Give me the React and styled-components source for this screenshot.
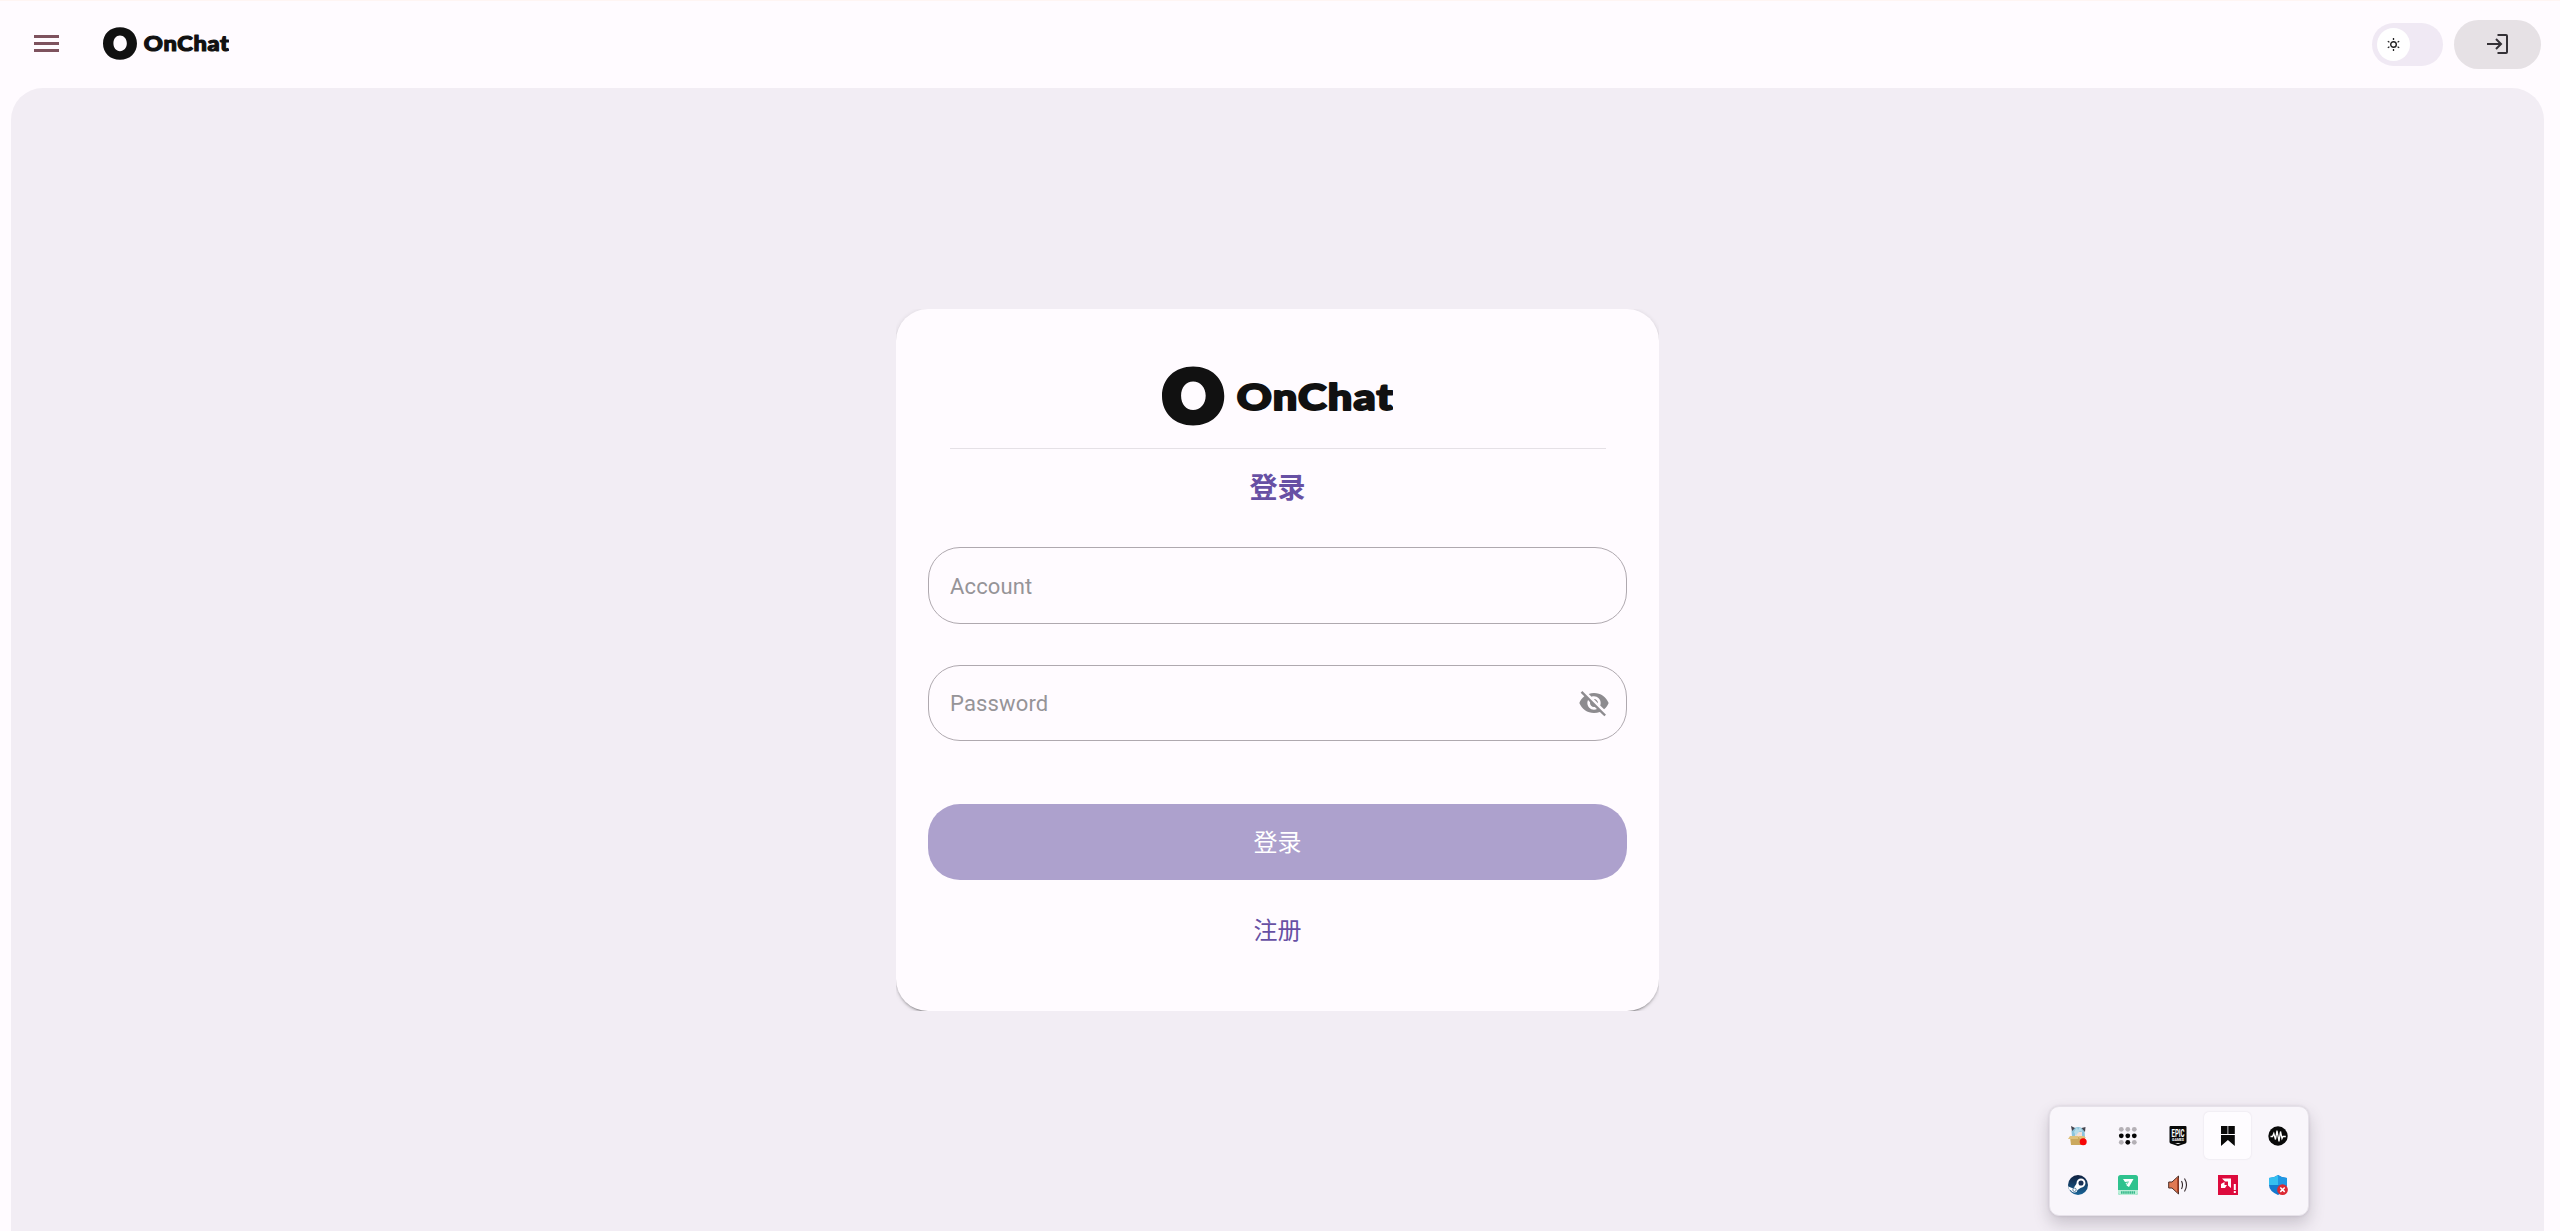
import React from 'react';
import styled, { createGlobalStyle } from 'styled-components';

const Global = createGlobalStyle`
  *, *::before, *::after { box-sizing: border-box; }
  html, body { margin: 0; height: 100%; overflow: hidden; background: #fffbff; }
  body { font-family: Roboto, "Noto Sans CJK SC", sans-serif; color: #1c1b1e; }
`;

const Page = styled.div`
  height: 1231px;
  display: flex;
  flex-direction: column;
  background: #fffbff;
  border-top: 1px solid #fff5f3;
  overflow: hidden;
`;

const Header = styled.header`
  flex: none;
  height: 87px;
  padding: 0 19px 0 32px;
  display: flex;
  align-items: center;
  gap: 11px;
`;

const Leading = styled.div`
  flex: 1;
  display: flex;
  align-items: center;
  gap: 41.5px;
  padding-bottom: 2px;
`;

const MenuButton = styled.button`
  width: 29px;
  height: 29px;
  padding: 0;
  border: 0;
  background: none;
  display: grid;
  place-items: center;
`;

const Switch = styled.div`
  width: 71px;
  height: 43px;
  padding: 5px;
  border-radius: 22px;
  background: #f0e9f4;
`;

const Thumb = styled.div`
  width: 33px;
  height: 33px;
  border-radius: 50%;
  background: #fff;
  display: grid;
  place-items: center;
`;

const ExitButton = styled.button`
  width: 87px;
  height: 49px;
  padding: 0 0 2px 1px;
  border: 0;
  border-radius: 25px;
  background: #e6e1e5;
  display: grid;
  place-items: center;
`;

const Main = styled.main`
  flex: 1;
  margin: 0 16px 0 11px;
  border-radius: 32px 32px 0 0;
  background: #f2edf4;
  display: flex;
  justify-content: center;
  align-items: flex-start;
  padding-top: 221px;
`;

const CardClip = styled.div`
  overflow: hidden;
  width: 763px;
  height: 702px;
`;

const Card = styled.section`
  height: 702px;
  padding: 57px 32px 0;
  border-radius: 32px;
  background: #fffbff;
  box-shadow: 0 3px 1px -2px rgba(0,0,0,.2), 0 2px 2px rgba(0,0,0,.14), 0 1px 5px rgba(0,0,0,.12);
  display: flex;
  flex-direction: column;
  align-items: stretch;
`;

const Brand = styled.div`
  display: flex;
  justify-content: center;
  height: 82px;
`;

const Divider = styled.hr`
  width: 656px;
  height: 1px;
  margin: 0 auto;
  border: 0;
  background: #e5e1e6;
`;

const Title = styled.h1`
  margin: 20px 0 0;
  height: 39px;
  font-size: 28px;
  line-height: 40px;
  font-weight: 700;
  text-align: center;
  color: #6750a4;
`;

const Field = styled.label`
  height: ${p => p.$h}px;
  margin-top: ${p => p.$top}px;
  padding: 0 16px 0 21px;
  border: 1px solid #afa9af;
  border-radius: 32px;
  display: flex;
  align-items: center;
  justify-content: space-between;
`;

const Input = styled.input`
  flex: 1;
  min-width: 0;
  padding: 2px 0 0;
  border: 0;
  outline: 0;
  background: none;
  font: 400 22px/32px Roboto, sans-serif;
  letter-spacing: 0.15px;
  &::placeholder { color: #969498; opacity: 1; }
`;

const Action = styled.button`
  height: 76px;
  margin-top: ${p => p.$top}px;
  padding: 1px 0 0;
  border: 0;
  border-radius: 32px;
  background: ${p => (p.$filled ? '#ada1cd' : 'transparent')};
  color: ${p => (p.$filled ? '#fff' : '#6750a4')};
  font: 400 24px/36px Roboto, "Noto Sans CJK SC", sans-serif;
`;

const Tray = styled.div`
  position: absolute;
  left: 2049px;
  top: 1106px;
  width: 260px;
  height: 110px;
  padding: 5px 4px;
  border-radius: 10px;
  border: 1px solid #e6e1e9;
  background: #f9f6fb;
  box-shadow: 0 8px 16px rgba(60,50,70,.22), 0 0 3px rgba(60,50,70,.14);
  display: grid;
  grid-template-columns: repeat(5, 47px);
  grid-template-rows: repeat(2, 47px);
  column-gap: 3px;
  row-gap: 2px;
`;

const TrayItem = styled.div`
  display: grid;
  place-items: center;
  border-radius: 5px;
  background: ${p => (p.$active ? '#fefcff' : 'transparent')};
  box-shadow: ${p => (p.$active ? '0 0 2px rgba(80,70,90,.14)' : 'none')};
`;

const GlyphBox = styled.svg`
  width: 20px;
  height: 20px;
  display: block;
  overflow: visible;
`;

/* Ring mark followed by the wordmark, drawn on a 230 x 60 grid. */
function Logo({ width, height }) {
  return (
    <svg width={width} height={height} viewBox="0 0 230 60" preserveAspectRatio="none">
      <path
        fill="#111"
        fillRule="evenodd"
        d="M31 .5C49 .5 62 12.500 62 30S49 59.500 31 59.500 0 47.500 0 30 13 .5 31 .5ZM31 15.500C24 15.500 19 21.500 19 29.700S24 44 31 44 43.500 38 43.500 29.700 38 15.500 31 15.500Z"
      />
      <text
        x="74.500"
        y="43.700"
        textLength="156.500"
        lengthAdjust="spacingAndGlyphs"
        letterSpacing="1"
        fontFamily="Lato, sans-serif"
        fontWeight="900"
        fontSize="36.500"
        fill="#111"
        stroke="#111"
        strokeWidth="2"
        strokeLinejoin="round"
      >OnChat</text>
    </svg>
  );
}

const MenuIcon = () => (
  <svg width="25" height="17" viewBox="0 0 25 17" fill="#7e525e">
    <path d="M0 0h25v3H0zM0 7h25v3H0zM0 14h25v3H0z" />
  </svg>
);

const SunIcon = () => (
  <svg width="13" height="13" viewBox="0 0 13 13" fill="none" stroke="#222">
    <circle cx="6.500" cy="6.500" r="2.800" strokeWidth="1.400" />
    <path d="M6.500 0v2M6.500 11v2M.8 3.200l1.600 1M10.600 8.800l1.600 1M12.200 3.200l-1.600 1M2.400 8.800l-1.600 1" strokeWidth="1.300" />
  </svg>
);

const ExitIcon = () => (
  <svg width="22" height="20" viewBox="0 0 22 20" fill="none" stroke="#343136" strokeWidth="2">
    <path d="M0 10h13M9 5l5 5-5 5M10.500 1H19q1 0 1 1v16q0 1-1 1h-8.500" />
  </svg>
);

const EyeOff = () => (
  <svg width="32" height="32" viewBox="0 0 24 24" fill="#8d8b8f">
    <path d="M12 7c2.760 0 5 2.240 5 5 0 .65-.13 1.260-.36 1.830l2.920 2.920c1.510-1.260 2.700-2.890 3.430-4.750-1.730-4.390-6-7.500-11-7.500-1.400 0-2.740.25-3.980.7l2.160 2.160C10.740 7.130 11.350 7 12 7zM2 4.270l2.280 2.280.46.46C3.080 8.300 1.780 10.020 1 12c1.730 4.390 6 7.500 11 7.500 1.550 0 3.030-.3 4.380-.84l.42.42L19.730 22 21 20.730 3.270 3 2 4.270zM7.530 9.800l1.550 1.550c-.05.21-.08.43-.08.65 0 1.660 1.340 3 3 3 .22 0 .44-.03.65-.08l1.550 1.550c-.67.33-1.410.53-2.200.53-2.760 0-5-2.240-5-5 0-.79.2-1.530.53-2.200zm4.310-.78l3.150 3.150.02-.16c0-1.660-1.340-3-3-3l-.17.01z" />
  </svg>
);

const Glyph = ({ children }) => <GlyphBox viewBox="0 0 20 20">{children}</GlyphBox>;

const BoxCat = () => (
  <Glyph>
    <path d="M4 11l-.5-6Q6 1 10 1t6.500 4l.5 6z" fill="#8cc4dc" />
    <path d="M3 0l4 2-3 3zM17.500 1l-4 1 3.500 4z" fill="#43434d" />
    <path d="M7 6h7v5H7z" fill="#f2ddd5" />
    <path d="M9 1l1 3 2-3 3 5-3-1-3 3-1 2-2-4z" fill="#b5dce9" />
    <path d="M2 11h15v8H3z" fill="#cba85d" />
    <path d="M0 13l2-3h8v3zM10 10h6l2 2-6 1z" fill="#dfc17b" />
    <circle cx="15.200" cy="15.700" r="3.500" fill="#f70606" />
  </Glyph>
);

const Dots = () => (
  <Glyph>
    {[0, 1, 2].flatMap(r => [0, 1, 2].map(c => (
      <circle key={`${r}${c}`} cx={3.3 + c * 6.500} cy={3.3 + r * 6.500} r="2.400" fill={r === 1 || (r === 2 && c === 1) ? '#050505' : '#b4b0b5'} />
    )))}
  </Glyph>
);

const Epic = () => (
  <Glyph>
    <path d="M1.500 1q0-1 1-1h15q1 0 1 1v15q0 1-1 1.400L10 20l-7.500-2.600q-1-.4-1-1.400z" fill="#090909" />
    <text x="10" y="10.500" textAnchor="middle" textLength="13" lengthAdjust="spacingAndGlyphs" fontFamily="Roboto" fontWeight="700" fontSize="11" fill="#fff">EPIC</text>
    <text x="10" y="15" textAnchor="middle" textLength="12" lengthAdjust="spacingAndGlyphs" fontFamily="Roboto" fontWeight="700" fontSize="4" fill="#fff">GAMES</text>
    <path d="M7 17h6l-3 1z" fill="#fff" />
  </Glyph>
);

const Bookmark = () => (
  <Glyph>
    <path d="M3 0h6.500v8H3zM10.300 0h6.500v8h-6.500zM3 9h13.800v11l-6.900-6L3 20z" fill="#090909" />
  </Glyph>
);

const Wave = () => (
  <Glyph>
    <circle cx="10" cy="10" r="9.700" fill="#090909" />
    <path d="M2.500 10.500h2l1.300-3 1.700 6L9 4.500l2 11 1.500-10 1.500 7 1-2h2.800" fill="none" stroke="#fff" strokeWidth="1.300" />
  </Glyph>
);

const Steam = () => (
  <Glyph>
    <defs>
      <linearGradient id="steam" x1="0" y1="0" x2="0" y2="1">
        <stop stopColor="#10203f" />
        <stop offset="1" stopColor="#196497" />
      </linearGradient>
    </defs>
    <circle cx="10" cy="10" r="10" fill="url(#steam)" />
    <path d="M.3 11.500l5 2L9 8l5 4-4.500 3Q9 18 6 17.500 3.500 17 3 15.500L1 14.500z" fill="#fff" />
    <circle cx="13" cy="8" r="3.500" fill="#183156" stroke="#fff" strokeWidth="1.900" />
    <circle cx="6.500" cy="14.800" r="1.700" fill="#fff" stroke="#21557f" strokeWidth=".7" />
  </Glyph>
);

const GreenBadge = () => (
  <Glyph>
    <rect width="20" height="20" rx="2.500" fill="#2fc28e" />
    <path d="M0 15h20v2.500Q20 20 17.500 20h-15Q0 20 0 17.500z" fill="#b9eed7" />
    <path d="M5 4h10.500L11 12 8.500 10.500 11 6.500 7 7z" fill="#fff" />
    <path d="M7.500 8l2.500-.8L8.500 10z" fill="#d8f6e9" />
    <path d="M3 17.500h14" stroke="#39ba8d" strokeWidth="2.400" strokeDasharray="1.600 .5" />
  </Glyph>
);

const Speaker = () => (
  <Glyph>
    <path d="M.7 7H4l6.500-6v18L4 13H.7z" fill="#e07a54" stroke="#4c2d25" strokeWidth="1" />
    <path d="M9.800 3v14" stroke="#a94328" strokeWidth="1.500" />
    <path d="M13.500 6q2 4 0 8M16.500 3.500q4 6.500 0 13" fill="none" stroke="#33272a" strokeWidth="1.100" />
  </Glyph>
);

const RedAlert = () => (
  <Glyph>
    <path d="M0 0h20v20H0z" fill="#dd0b3d" />
    <path d="M4 3.500h9V13l-3-2.500V6.500H7zM3 9l3.500-2v3H9L7 13H3z" fill="#fff" />
    <path d="M15.800 9h2v6h-2zM15.800 16h2v2h-2z" fill="#fff" />
  </Glyph>
);

const Shield = () => (
  <Glyph>
    <path d="M10 0q4 3 9 3v7q0 6-9 10-9-4-9-10V3q5 0 9-3" fill="#1479cf" />
    <path d="M10 0v10H1V3q5 0 9-3" fill="#35bff0" />
    <path d="M10 0q4 3 9 3v7h-9z" fill="#2097e3" />
    <circle cx="14.500" cy="14.700" r="5.400" fill="#dc2933" />
    <path d="M12.300 12.500l4.400 4.400m0-4.400l-4.400 4.400" stroke="#fff" strokeWidth="1.500" />
  </Glyph>
);

const trayIcons = [BoxCat, Dots, Epic, Bookmark, Wave, Steam, GreenBadge, Speaker, RedAlert, Shield];

export default function App() {
  return (
    <Page>
      <Global />
      <Header>
        <Leading>
          <MenuButton><MenuIcon /></MenuButton>
          <Logo width={126} height={33} />
        </Leading>
        <Switch><Thumb><SunIcon /></Thumb></Switch>
        <ExitButton><ExitIcon /></ExitButton>
      </Header>
      <Main>
        <CardClip>
          <Card>
            <Brand><Logo width={231} height={60} /></Brand>
            <Divider />
            <Title>登录</Title>
            <Field $h={77} $top={39}><Input placeholder="Account" /></Field>
            <Field $h={76} $top={41}><Input type="password" placeholder="Password" /><EyeOff /></Field>
            <Action $filled $top={63}>登录</Action>
            <Action $top={12}>注册</Action>
          </Card>
        </CardClip>
      </Main>
      <Tray>
        {trayIcons.map((Icon, i) => (
          <TrayItem key={i} $active={i === 3}><Icon /></TrayItem>
        ))}
      </Tray>
    </Page>
  );
}
